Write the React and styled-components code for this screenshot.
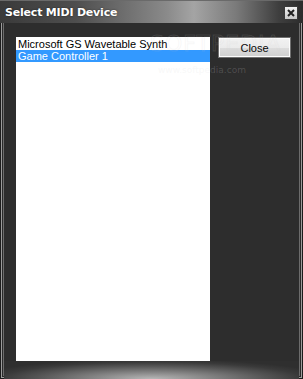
import React from 'react'
import styled, { createGlobalStyle } from 'styled-components'

const GlobalStyle = createGlobalStyle`
    html, body {
        margin: 0;
        padding: 0;
        background: #1e1e1e;
    }
`

const Window = styled.div`
    position: relative;
    width: 303px;
    height: 379px;
    display: flex;
    flex-direction: column;
    background: #2d2d2d;
    overflow: hidden;
    box-shadow: inset 0 0 0 1px #1c1c1c, inset 0 0 0 2px #9c9c9c, inset 0 0 0 3px #2a2a2a, inset 0 0 0 4px #6c6c6c;
`

const TitleBar = styled.div`
    height: 23px;
    flex-shrink: 0;
    display: flex;
    align-items: center;
    justify-content: space-between;
    padding: 0 5px 0 5px;
    box-sizing: border-box;
    background: linear-gradient(90deg, #3a3a3a 0%, #4e4e4e 25%, #8a8a8a 55%, #a4a4a4 64%, #7a7a7a 78%, #3e3e3e 92%, #2c2c2c 100%);
    border-top: 1px solid #6a6a6a;
`

const Title = styled.span`
    font-family: "DejaVu Sans", Verdana, sans-serif;
    font-weight: bold;
    font-size: 11px;
    color: #ffffff;
    text-shadow: 0 0 2px rgba(0, 0, 0, 0.6);
    letter-spacing: -0.2px;
`

const CloseBox = styled.div`
    width: 14px;
    height: 14px;
    margin-top: 1px;
    display: flex;
    align-items: center;
    justify-content: center;
    background: linear-gradient(180deg, #f2f2f2 0%, #c8c8c8 100%);
    border: 1px solid #3a3a3a;
    box-sizing: border-box;
`

const Body = styled.div`
    flex: 1;
    display: flex;
    align-items: flex-start;
    padding: 14px 0 0 16px;
`

const ListBox = styled.div`
    width: 194px;
    height: 324px;
    background: #ffffff;
    display: flex;
    flex-direction: column;
    padding-top: 1px;
    box-sizing: border-box;
`

const ListItem = styled.div`
    height: 12px;
    padding-left: 2px;
    font-family: "Liberation Sans", Arial, sans-serif;
    font-size: 11px;
    line-height: 12px;
    white-space: nowrap;
    color: ${p => (p.$selected ? '#ffffff' : '#000000')};
    background: ${p => (p.$selected ? '#3399ff' : 'transparent')};
`

const Button = styled.div`
    margin-left: 8px;
    width: 73px;
    height: 21px;
    box-sizing: border-box;
    display: flex;
    align-items: center;
    justify-content: center;
    font-family: "Liberation Sans", Arial, sans-serif;
    font-size: 11px;
    color: #000000;
    background: linear-gradient(180deg, #f2f2f2 0%, #ebebeb 50%, #dddddd 51%, #cfcfcf 100%);
    border: 1px solid #707070;
    box-shadow: inset 0 0 0 1px #fcfcfc;
`

const BottomGlow = styled.div`
    height: 18px;
    flex-shrink: 0;
    margin: 0 4px 2px 4px;
    background: radial-gradient(ellipse 60% 110% at 50% 100%, #b8b8b8 0%, #8a8a8a 30%, #555555 65%, #3a3a3a 85%, #2f2f2f 100%);
    border-bottom: 1px solid #a0a0a0;
`

const Watermark = styled.div`
    position: absolute;
    top: 31px;
    left: 150px;
    font-family: "DejaVu Sans", Verdana, sans-serif;
    font-size: 22px;
    letter-spacing: 1px;
    color: transparent;
    -webkit-text-stroke: 1px rgba(200, 200, 200, 0.14);
    pointer-events: none;
`

const WatermarkUrl = styled.div`
    position: absolute;
    top: 65px;
    left: 158px;
    font-family: "DejaVu Sans", Verdana, sans-serif;
    font-size: 9px;
    color: rgba(220, 220, 220, 0.2);
    pointer-events: none;
`

export default function App() {
    return (
        <>
            <GlobalStyle />
            <Window>
                <TitleBar>
                    <Title>{'Select MIDI Device'}</Title>
                    <CloseBox>
                        <svg width="8" height="8" viewBox="0 0 8 8">
                            <path d="M1 1 L7 7 M7 1 L1 7" stroke="#222" strokeWidth="2" />
                        </svg>
                    </CloseBox>
                </TitleBar>
                <Body>
                    <ListBox>
                        <ListItem>{'Microsoft GS Wavetable Synth'}</ListItem>
                        <ListItem $selected>{'Game Controller 1'}</ListItem>
                    </ListBox>
                    <Button>{'Close'}</Button>
                </Body>
                <BottomGlow />
                <Watermark>{'SOFTPEDIA'}</Watermark>
                <WatermarkUrl>{'www.softpedia.com'}</WatermarkUrl>
            </Window>
        </>
    )
}
